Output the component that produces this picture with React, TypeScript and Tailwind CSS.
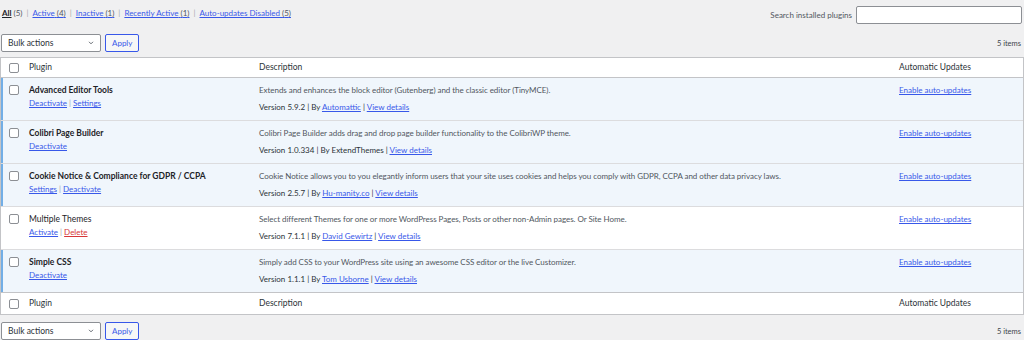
import React from 'react';

interface Plugin {
  name: string;
  active: boolean;
  actions: string[];
  description: string;
  version: string;
  author: string;
  authorLink: boolean;
}

const plugins: Plugin[] = [
  {
    name: 'Advanced Editor Tools',
    active: true,
    actions: ['Deactivate', 'Settings'],
    description: 'Extends and enhances the block editor (Gutenberg) and the classic editor (TinyMCE).',
    version: '5.9.2',
    author: 'Automattic',
    authorLink: true,
  },
  {
    name: 'Colibri Page Builder',
    active: true,
    actions: ['Deactivate'],
    description: 'Colibri Page Builder adds drag and drop page builder functionality to the ColibriWP theme.',
    version: '1.0.334',
    author: 'ExtendThemes',
    authorLink: false,
  },
  {
    name: 'Cookie Notice & Compliance for GDPR / CCPA',
    active: true,
    actions: ['Settings', 'Deactivate'],
    description:
      'Cookie Notice allows you to you elegantly inform users that your site uses cookies and helps you comply with GDPR, CCPA and other data privacy laws.',
    version: '2.5.7',
    author: 'Hu-manity.co',
    authorLink: true,
  },
  {
    name: 'Multiple Themes',
    active: false,
    actions: ['Activate', 'Delete'],
    description: 'Select different Themes for one or more WordPress Pages, Posts or other non-Admin pages. Or Site Home.',
    version: '7.1.1',
    author: 'David Gewirtz',
    authorLink: true,
  },
  {
    name: 'Simple CSS',
    active: true,
    actions: ['Deactivate'],
    description: 'Simply add CSS to your WordPress site using an awesome CSS editor or the live Customizer.',
    version: '1.1.1',
    author: 'Tom Usborne',
    authorLink: true,
  },
];

const filters = [
  { label: 'Active', count: 4 },
  { label: 'Inactive', count: 1 },
  { label: 'Recently Active', count: 1 },
  { label: 'Auto-updates Disabled', count: 5 },
];

const Checkbox = () => (
  <span className="block w-[10px] h-[10px] rounded-[2px] border border-[#8c8f94] bg-white" />
);

const Link = ({ children, red }: { children: React.ReactNode; red?: boolean }) => (
  <a className={`underline ${red ? 'text-[#d63638]' : 'text-[#3858e9]'}`}>{children}</a>
);

const TableNav = ({ className }: { className: string }) => (
  <div className={`flex items-center justify-between ${className}`}>
    <div className="flex items-center gap-[4px] pl-[1px]">
      <div className="flex items-center justify-between w-[100px] h-[18px] px-[6px] bg-white border border-[#8c8f94] rounded-[2px] text-[#2c3338] text-[8.5px]">
        <span>Bulk actions</span>
        <svg width="8" height="8" viewBox="0 0 20 20" className="mr-[-1px]">
          <path d="M5 7l5 5 5-5" fill="none" stroke="#50575e" strokeWidth="2.2" />
        </svg>
      </div>
      <button className="h-[18px] px-[6px] border border-[#3858e9] rounded-[2px] bg-[#f6f7f7] text-[#3858e9] text-[8px]">
        Apply
      </button>
    </div>
    <span className="pr-[3px] text-[7.5px] text-[#3c434a]">5 items</span>
  </div>
);

const HeaderRow = ({ className }: { className: string }) => (
  <div className={`grid grid-cols-[24px_226px_640px_1fr] items-center text-[8.5px] text-[#2c3338] ${className}`}>
    <div className="pl-[8px]">
      <Checkbox />
    </div>
    <div className="pl-[4px]">Plugin</div>
    <div className="pl-[8px]">Description</div>
    <div className="pl-[8px]">Automatic Updates</div>
  </div>
);

export default function App() {
  return (
    <div className="w-[1024px] h-[340px] overflow-hidden bg-[#f0f0f1] font-['Lato',sans-serif] text-[8px] leading-[11px]">
      <div className="flex items-start justify-between h-[30px]">
        <div className="flex items-center pt-[8px] pl-[2px] text-[#50575e]">
          <span className="text-[#1d2327] font-bold underline">All</span>
          <span className="ml-[2px]">(5)</span>
          {filters.map((f) => (
            <React.Fragment key={f.label}>
              <span className="mx-[4px] text-[#a7aaad]">|</span>
              <a className="text-[#3858e9] underline">
                {f.label} <span className="text-[#50575e]">({f.count})</span>
              </a>
            </React.Fragment>
          ))}
        </div>
        <div className="flex items-center gap-[4px] pt-[6px] pr-[2px]">
          <span className="text-[#50575e]">Search installed plugins</span>
          <div className="w-[166px] h-[18px] bg-white border border-[#8c8f94] rounded-[2px]" />
        </div>
      </div>

      <TableNav className="h-[18px] mt-[4px]" />

      <div className="mt-[5px] bg-white border border-[#c3c4c7]">
        <HeaderRow className="h-[20px] border-b border-[#c3c4c7]" />
        {plugins.map((p, i) => (
          <div
            key={p.name}
            className={`grid grid-cols-[24px_226px_640px_1fr] h-[43px] border-b ${
              i === plugins.length - 1 ? 'border-[#c3c4c7]' : 'border-[#dcdcde]'
            } ${p.active ? 'bg-[#f0f6fc]' : 'bg-white'}`}
          >
            <div className={`pl-[8px] pt-[7px] ${p.active ? 'shadow-[inset_2px_0_0_#72aee6]' : ''}`}>
              <Checkbox />
            </div>
            <div className="pl-[4px] pt-[7px]">
              <div className={`text-[#1d2327] text-[8.5px] ${p.active ? 'font-bold' : ''}`}>{p.name}</div>
              <div className="mt-[2px] text-[#a7aaad]">
                {p.actions.map((a, j) => (
                  <React.Fragment key={a}>
                    {j > 0 && <span className="mx-[2px]">|</span>}
                    <Link red={a === 'Delete'}>{a}</Link>
                  </React.Fragment>
                ))}
              </div>
            </div>
            <div className="pl-[8px] pt-[7px]">
              <div className="text-[#50575e] tracking-[-0.05px]">{p.description}</div>
              <div className="mt-[6px] text-[#2c3338]">
                Version {p.version} | By {p.authorLink ? <Link>{p.author}</Link> : p.author} |{' '}
                <Link>View details</Link>
              </div>
            </div>
            <div className="pl-[8px] pt-[7px]">
              <Link>Enable auto-updates</Link>
            </div>
          </div>
        ))}
        <HeaderRow className="h-[21px]" />
      </div>

      <TableNav className="h-[18px] mt-[7px]" />
    </div>
  );
}
